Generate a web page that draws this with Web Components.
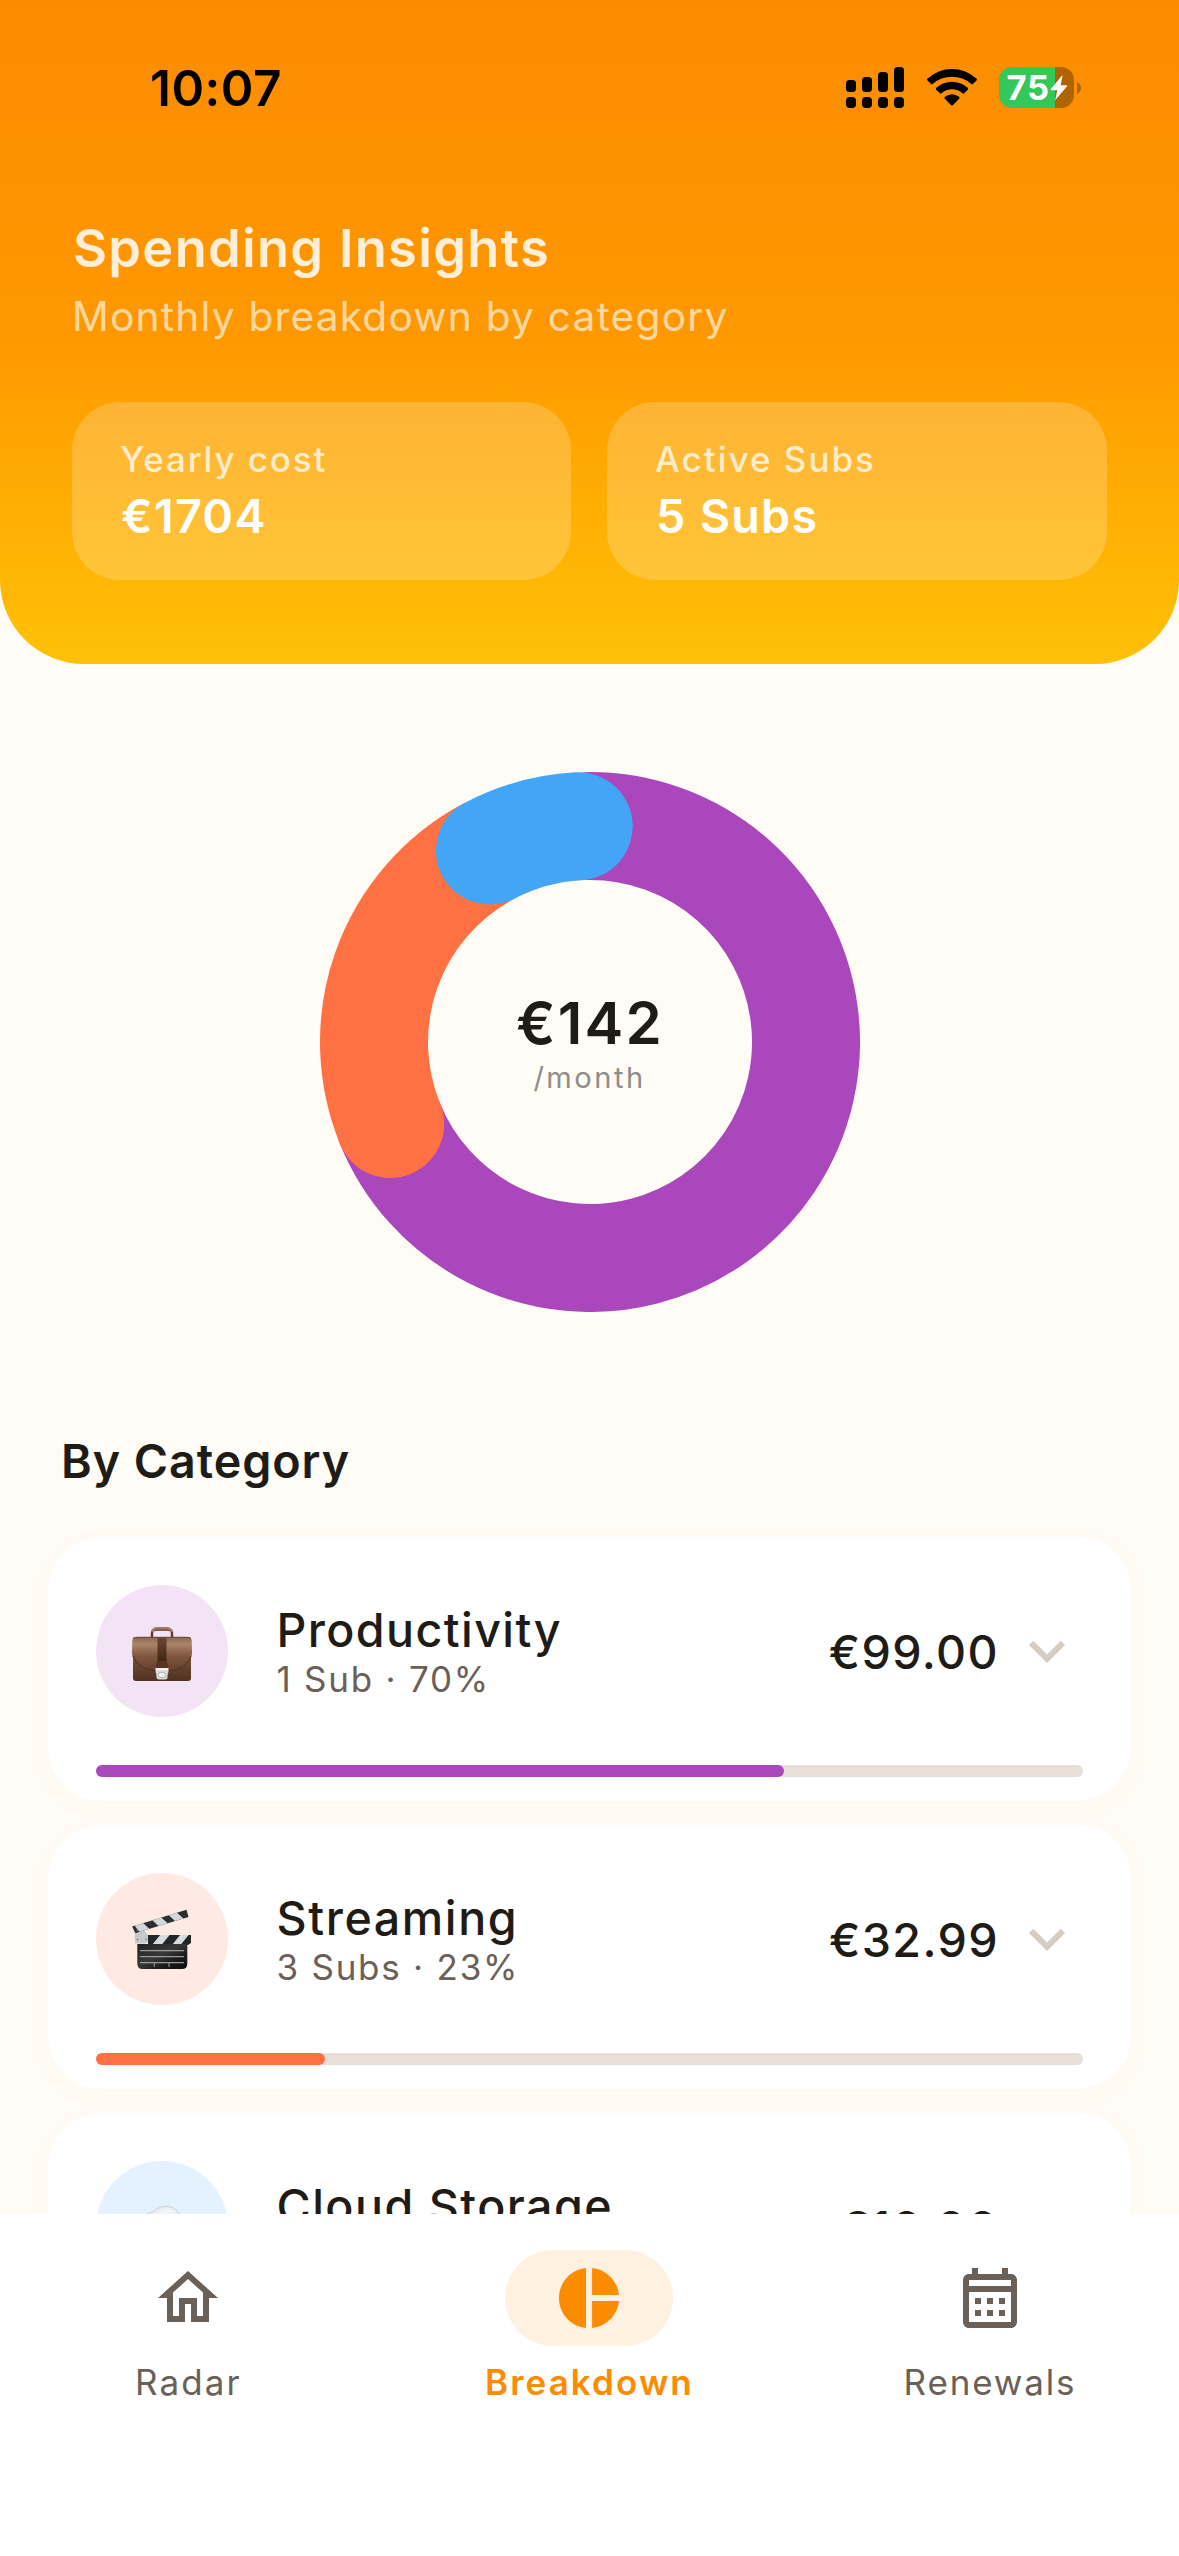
<!DOCTYPE html>
<html lang="en">
<head>
<meta charset="utf-8">
<title>Spending Insights</title>
<style>
  html, body { margin: 0; height: 100%; }
  body { font-family: Inter, "Liberation Sans", sans-serif; background: #fffcf5; overflow: hidden; }
</style>
</head>
<body>
<spending-app></spending-app>

<script>
const define = (name, html) => {
  const tpl = document.createElement('template');
  tpl.innerHTML = html;
  customElements.define(name, class extends HTMLElement {
    constructor() {
      super();
      this.attachShadow({ mode: 'open' }).append(tpl.content.cloneNode(true));
    }
  });
};

define('status-bar', `
<style>
  :host { display: flex; align-items: center; justify-content: space-between; height: 60px; padding: 58px 98px 0 150px; color: #000; }
  .time { font-size: 49.5px; font-weight: 600; line-height: 60px; letter-spacing: .49px; }
  .icons { display: flex; align-items: center; margin-bottom: 1px; }
  svg { display: block; }
  .wifi { margin: 0 22px 0 23px; }
  .battery { display: flex; align-items: center; box-sizing: border-box; width: 75px; height: 41px; padding-left: 7.5px; border-radius: 13px;
    background: linear-gradient(90deg, #34c759 56px, rgba(0,0,0,.3) 56px); color: #fff; }
  .battery span { font-size: 34.5px; font-weight: 700; line-height: 41px; letter-spacing: .77px; }
  .nub { margin-left: 3px; }
</style>
<div class="time">10:07</div>
<div class="icons">
  <svg width="58" height="41" viewBox="0 0 58 41">
    <rect x="0" y="13" width="10" height="12" rx="3.5"/><rect x="16" y="10" width="10" height="15" rx="3.5"/>
    <rect x="32" y="5" width="10" height="20" rx="3.5"/><rect x="48" y="0" width="10" height="25" rx="3.5"/>
    <rect x="0" y="30" width="10" height="11" rx="4"/><rect x="16" y="30" width="10" height="11" rx="4"/>
    <rect x="32" y="30" width="10" height="11" rx="4"/><rect x="48" y="30" width="10" height="11" rx="4"/>
  </svg>
  <svg class="wifi" width="50" height="37" viewBox="0 0 50 37">
    <path d="M.6 9.6A36 36 0 0 1 49.4 9.6Q50.4 10.4 49.5 11.4L45.9 15.1Q45.2 15.8 44.3 15A29 29 0 0 0 5.7 15Q4.8 15.8 4.1 15.1L.5 11.4Q-.4 10.4 .6 9.6Z"/>
    <path d="M9.3 18.8A23.3 23.3 0 0 1 40.7 18.8Q41.7 19.8 40.8 20.7L37.2 24.3Q36.4 25 35.5 24.2A16.3 16.3 0 0 0 14.5 24.2Q13.6 25 12.8 24.3L9.2 20.7Q8.3 19.8 9.3 18.8Z"/>
    <path d="M18 27.8A11 11 0 0 1 32 27.8Q33 28.7 32.1 29.7L25.8 36.3Q25 37.1 24.2 36.3L17.9 29.7Q17 28.7 18 27.8Z"/>
  </svg>
  <div class="battery"><span>75</span>
    <svg width="18" height="26" viewBox="0 0 18 26"><path d="M12 .5L.7 14.3Q.2 15.3 1.2 15.3H7.3L5.2 25.2L17 11.2Q17.5 10.2 16.5 10.2H10.6L12.6 .8Z" fill="#fff"/></svg>
  </div>
  <svg class="nub" width="4" height="12" viewBox="0 0 4 12"><path d="M0 0Q4 2 4 6T0 12Z" fill-opacity=".3"/></svg>
</div>`);

define('stat-card', `
<style>
  :host { display: block; box-sizing: border-box; height: 178px; padding: 35px 48px 0; border-radius: 48px; background: rgba(255,255,255,.2); }
  .label { font-size: 35px; font-weight: 500; line-height: 44px; letter-spacing: var(--label-track); color: rgba(255,255,255,.75); white-space: nowrap; }
  .value { margin: 6px 0 0 1px; font-size: 46.6px; font-weight: 600; line-height: 58px; letter-spacing: 1.3px; color: #fff; }
</style>
<div class="label"><slot name="label"></slot></div>
<div class="value"><slot></slot></div>`);

define('insights-header', `
<style>
  :host { display: block; height: 664px; border-radius: 0 0 84px 84px; background: linear-gradient(180deg, #fb8c00 0%, #ff9800 50%, #ffc107 100%); }
  .body { padding: 98px 72px 0; }
  h1 { margin: 0 0 0 1px; font-size: 52.4px; font-weight: 600; line-height: 64px; letter-spacing: 1.3px; color: rgba(255,255,255,.85); }
  p { margin: 12px 0 0; font-size: 40.7px; line-height: 50px; letter-spacing: 1.19px; color: rgba(255,255,255,.65); }
  .stats { display: grid; grid-template-columns: 499px 500px; gap: 36px; margin-top: 60px; }
</style>
<status-bar></status-bar>
<div class="body">
  <h1>Spending Insights</h1>
  <p>Monthly breakdown by category</p>
  <div class="stats">
    <stat-card style="--label-track:1.85px"><span slot="label">Yearly cost</span>€1704</stat-card>
    <stat-card style="--label-track:2px"><span slot="label">Active Subs</span>5 Subs</stat-card>
  </div>
</div>`);

/* Ring of round-capped arcs; later segments overlap earlier ones. */
customElements.define('donut-chart', class extends HTMLElement {
  connectedCallback() {
    const point = deg => {
      const a = deg * Math.PI / 180;
      return `${(270 + 216 * Math.sin(a)).toFixed(2)} ${(270 - 216 * Math.cos(a)).toFixed(2)}`;
    };
    const arc = ([from, to, color]) =>
      `<path d="M${point(from)}A216 216 0 ${to - from > 180 ? 1 : 0} 1 ${point(to)}" stroke="${color}"/>`;
    this.attachShadow({ mode: 'open' }).innerHTML = `
<style>
  :host { display: grid; place-items: center; width: 540px; height: 540px; margin: 108px auto 0; }
  svg, .center { grid-area: 1 / 1; }
  .center { text-align: center; }
  .total { font-size: 58.2px; font-weight: 600; line-height: 70px; letter-spacing: 2.25px; color: #1f1b16; padding-left: 1px; }
  .unit { margin-top: 2px; font-size: 29.1px; line-height: 36px; letter-spacing: 2.48px; color: #8f8d89; }
</style>
<svg width="540" height="540" viewBox="0 0 540 540" fill="none" stroke-width="108" stroke-linecap="round">
  ${[[0, 248, '#ab47bc'], [247.7, 331, '#ff7043'], [332.4, 357, '#42a5f5']].map(arc).join('')}
</svg>
<div class="center"><div class="total">€142</div><div class="unit">/month</div></div>`;
  }
});

define('category-card', `
<style>
  :host { display: block; flex: none; box-sizing: border-box; height: 264px; padding: 48px 48px 24px; border-radius: 54px; background: #fff;
    box-shadow: 0 6px 24px rgba(255,120,60,.03); }
  .row { display: flex; align-items: center; height: 132px; }
  .badge { display: grid; place-items: center; width: 132px; height: 132px; border-radius: 50%; background: var(--tint); }
  .text { flex: 1; padding-left: 48.5px; white-space: nowrap; }
  .title { font-size: 46.6px; font-weight: 500; line-height: 58px; letter-spacing: var(--title-track, 1.4px); color: #1f1b16; }
  .sub { min-height: 44px; margin-top: -2px; font-size: 35px; line-height: 44px; letter-spacing: 1.75px; color: #6b6058; }
  .price { padding-top: 2px; font-size: 46.6px; font-weight: 500; line-height: 58px; letter-spacing: 1.39px; color: #1f1b16; }
  .chevron { display: block; margin-left: 12px; }
  .track { height: 12px; margin-top: 48px; border-radius: 6px; background: #e8dfd9; }
  .fill { width: var(--share); height: 12px; border-radius: 6px; background: var(--color); }
</style>
<div class="row">
  <div class="badge"><slot name="icon"></slot></div>
  <div class="text"><div class="title"><slot name="title"></slot></div><div class="sub"><slot name="sub"></slot></div></div>
  <div class="price"><slot name="price"></slot></div>
  <svg class="chevron" width="72" height="72" viewBox="0 0 24 24" fill="#d7ccc0"><path d="M7.41 8.59L12 13.17l4.59-4.58L18 10l-6 6-6-6z"/></svg>
</div>
<div class="track"><div class="fill"></div></div>`);

define('briefcase-icon', `
<style>:host, svg { display: block; }</style>
<svg width="72" height="72" viewBox="0 0 72 72">
  <defs>
    <linearGradient id="b" x1="0" y1="0" x2="0" y2="1"><stop offset="0" stop-color="#8a6650"/><stop offset="1" stop-color="#50311f"/></linearGradient>
    <linearGradient id="f" x1="0" y1="0" x2="0" y2="1"><stop offset="0" stop-color="#8d6a50"/><stop offset=".2" stop-color="#a98469"/><stop offset=".55" stop-color="#80563f"/><stop offset="1" stop-color="#633e2d"/></linearGradient>
    <linearGradient id="s" x1="0" y1="0" x2="0" y2="1"><stop offset="0" stop-color="#6d4631"/><stop offset="1" stop-color="#3f2517"/></linearGradient>
  </defs>
  <path d="M26 22V18Q26 14.500 31 14.500H41Q46 14.500 46 18V22" fill="none" stroke="#5a3b29" stroke-width="2.4"/>
  <path d="M26 17Q27.5 13.2 31 13.2H41Q44.5 13.2 46 17" fill="none" stroke="#a37a5d" stroke-width="2.6"/>
  <rect x="7" y="26" width="58" height="40" rx="3" fill="url(#b)"/>
  <path d="M9 22.5H63Q65.5 22.5 65.7 26L66 38Q65 52 48 55.5Q36 57.5 24 55.5Q7 52 6 38L6.3 26Q6.5 22.5 9 22.5Z" fill="url(#f)"/>
  <path d="M7 41Q11 52.5 25 55.3Q36 57.2 47 55.3Q61 52.5 65 41" fill="none" stroke="#432719" stroke-width="1.3" opacity=".5"/>
  <path d="M7 23.3Q9 22.3 12 22.3H60Q63 22.3 65 23.3" stroke="#5b3b28" fill="none"/>
  <rect x="31.5" y="22.5" width="9" height="25" fill="url(#s)"/>
  <path d="M30 54V49Q31 46 34 46H38Q41 46 42 49V54Z" fill="#5a3524"/>
  <path d="M29.5 53H42.5V57Q41.5 58 41.5 62Q41.5 64.5 39 64.5H33Q30.5 64.5 30.5 62Q30.5 58 29.5 57Z" fill="#d7d9da"/>
  <path d="M30 53.5H42V55H30Z" fill="#fff"/>
  <rect x="32.5" y="57.5" width="7" height="5" rx="2" fill="#eef0f0" stroke="#a9aaab" stroke-width=".8"/>
</svg>`);

define('clapper-icon', `
<style>:host, svg { display: block; }</style>
<svg width="72" height="72" viewBox="0 0 72 72">
  <defs>
    <linearGradient id="k" x1="0" y1="0" x2="1" y2="1"><stop offset="0" stop-color="#222"/><stop offset=".45" stop-color="#383838"/><stop offset=".7" stop-color="#1a1a1a"/><stop offset="1" stop-color="#0d0d0d"/></linearGradient>
    <clipPath id="a"><path d="M6.3 23.5L60.5 6.8L62.5 14L9.5 30Z"/></clipPath>
    <clipPath id="c"><path d="M9.5 32H65V40L62 42H9.5Z"/></clipPath>
  </defs>
  <path d="M8.500 24L12 23.5Q20 27 24 36L20 40.5H9Z" fill="#c5c9cb"/>
  <g clip-path="url(#a)">
    <rect width="72" height="34" fill="#2d2e30"/>
    <path d="M6 20.500L15 18L24 26.500L14 30ZM24.500 15.500L33 12.500L42.500 21L33.500 24ZM41 10.500L49 8L58 16L50 19Z" fill="#d3d6da"/>
    <path d="M5 23L9 31L14 29.500L8 22Z" fill="#2d2e30"/>
  </g>
  <g clip-path="url(#c)">
    <rect x="22" y="31" width="44" height="12" fill="#242526"/>
    <path d="M26 42L34.500 31.5H44L35.500 42ZM46 42L54.500 31.5H63L54.500 42Z" fill="#d8dbde"/>
  </g>
  <path d="M11.3 41H61.3V60.5Q61.3 66 56 66H16.6Q11.3 66 11.3 60.5Z" fill="url(#k)"/>
  <path d="M14 47.7H58M14 53.7H58M14 59.7H58" stroke="#9a9a9a" stroke-width="1.3"/>
  <path d="M28.3 60V64M43 60V64" stroke="#8a8a8a" stroke-width="1.2"/>
  <g fill="#888c90"><circle cx="11.5" cy="27" r="1"/><circle cx="11.5" cy="36.5" r="1"/><circle cx="20" cy="36.5" r="1"/></g>
</svg>`);

define('cloud-icon', `
<style>:host, svg { display: block; }</style>
<svg width="72" height="72" viewBox="0 0 72 72">
  <defs><linearGradient id="g" x1="0" y1="0" x2="0" y2="1"><stop offset="0" stop-color="#e6eaee"/><stop offset=".5" stop-color="#f4f6f8"/><stop offset="1" stop-color="#d2d8de"/></linearGradient></defs>
  <path d="M17 58Q6 57 6 48Q6 39 16 37.5Q14 23 27 20.8Q32 15.3 41 15.3Q53 16 55.5 30Q67 33 66 46Q64 58 54 58Z" fill="url(#g)" stroke="#c9d2da" stroke-width="1"/>
  <circle cx="41" cy="28.5" r="11.5" fill="#f2f3f4"/>
</svg>`);

define('nav-item', `
<style>
  :host { display: flex; flex-direction: column; align-items: center; gap: 14px; color: #6b6058; font-weight: 400; }
  :host([active]) { color: #fb8c00; font-weight: 600; }
  .pill { display: grid; place-items: center; width: 168px; height: 96px; border-radius: 48px; }
  :host([active]) .pill { background: #fff1e0; }
  .label { font-size: 35px; line-height: 44px; letter-spacing: var(--track, 2.1px); padding-left: 1px; }
</style>
<div class="pill"><slot name="icon"></slot></div>
<div class="label"><slot></slot></div>`);

define('bottom-nav', `
<style>
  :host { display: grid; grid-template-columns: 376px 426px 375px; box-sizing: border-box; flex: none; height: 342px; padding-top: 36px; background: #fff; }
  svg { display: block; fill: currentColor; }
</style>
<nav-item>
  <svg slot="icon" width="72" height="72" viewBox="0 0 24 24"><path d="M12 5.69l5 4.5V18h-2v-6H9v6H7v-7.81l5-4.5M12 3L2 12h3v8h6v-6h2v6h6v-8h3L12 3z"/></svg>Radar
</nav-item>
<nav-item active>
  <svg slot="icon" width="72" height="72" viewBox="0 0 24 24"><path d="M11 2v20c-5.07-.5-9-4.79-9-10s3.93-9.5 9-10zm2.03 0v8.99H22c-.47-4.74-4.24-8.52-8.97-8.99zm0 11.01V22c4.74-.47 8.5-4.25 8.97-8.99h-8.97z"/></svg>Breakdown
</nav-item>
<nav-item style="--track:1.85px">
  <svg slot="icon" width="72" height="72" viewBox="0 0 24 24"><path d="M19 4h-1V2h-2v2H8V2H6v2H5c-1.11 0-1.99.9-1.99 2L3 20c0 1.1.89 2 2 2h14c1.1 0 2-.9 2-2V6c0-1.1-.9-2-2-2zm0 16H5V10h14v10zm0-12H5V6h14v2zM9 14H7v-2h2v2zm4 0h-2v-2h2v2zm4 0h-2v-2h2v2zm-8 4H7v-2h2v2zm4 0h-2v-2h2v2zm4 0h-2v-2h2v2z"/></svg>Renewals
</nav-item>`);

define('spending-app', `
<style>
  :host { display: flex; flex-direction: column; width: 1179px; height: 2556px; overflow: hidden; background: #fffcf5; }
  main { flex: 1; min-height: 0; overflow: hidden; }
  h2 { margin: 120px 0 0 61px; font-size: 46.6px; font-weight: 600; line-height: 58px; letter-spacing: .95px; color: #1f1b16; }
  .list { display: flex; flex-direction: column; gap: 24px; padding: 47px 48px 0; }
</style>
<main>
  <insights-header></insights-header>
  <donut-chart></donut-chart>
  <h2>By Category</h2>
  <div class="list">
    <category-card style="--tint:#f2e3f5;--color:#ab47bc;--share:69.7%">
      <briefcase-icon slot="icon"></briefcase-icon>
      <span slot="title">Productivity</span><span slot="sub">1 Sub · 70%</span><span slot="price">€99.00</span>
    </category-card>
    <category-card style="--tint:#ffeae3;--color:#ff7043;--share:23.2%;--title-track:1.6px">
      <clapper-icon slot="icon"></clapper-icon>
      <span slot="title">Streaming</span><span slot="sub">3 Subs · 23%</span><span slot="price">€32.99</span>
    </category-card>
    <category-card style="--tint:#e3f2fe;--color:#42a5f5;--share:7%;--title-track:1.48px">
      <cloud-icon slot="icon"></cloud-icon>
      <span slot="title">Cloud Storage</span><span slot="price">€10.00</span>
    </category-card>
  </div>
</main>
<bottom-nav></bottom-nav>`);
</script>
</body>
</html>
